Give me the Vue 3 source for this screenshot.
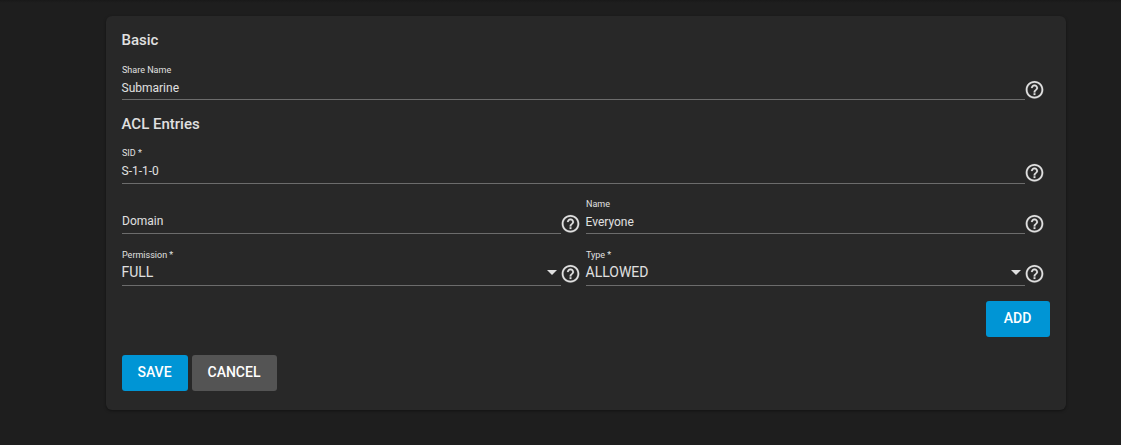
<template>
  <main class="page">
    <form class="card" @submit.prevent>
      <section v-for="section in sections" :key="section.title" class="fieldset">
        <h4 class="legend">{{ section.title }}</h4>
        <div
          v-for="(row, index) in section.rows"
          :key="index"
          class="row"
          :class="{ 'row-select': row[0].type === 'select' }"
        >
          <div v-for="field in row" :key="field.label" class="field" :class="field.type">
            <div class="control">
              <span v-if="field.value" class="label">{{ field.label }}</span>
              <span class="value" :class="{ placeholder: !field.value }">
                {{ field.value || field.label }}
              </span>
              <span v-if="field.type === 'select'" class="arrow"></span>
            </div>
            <svg class="help" viewBox="0 -0.4 24 24">
              <path
                d="M11 18h2v-2h-2v2zm1-16C6.48 2 2 6.48 2 12s4.48 10 10 10 10-4.48 10-10S17.52 2 12 2zm0 18c-4.41 0-8-3.59-8-8s3.59-8 8-8 8 3.59 8 8-3.59 8-8 8zm0-14c-2.21 0-4 1.79-4 4h2c0-1.1.9-2 2-2s2 .9 2 2c0 2-3 1.75-3 5h2c0-2.25 3-2.5 3-5 0-2.21-1.79-4-4-4z"
              />
            </svg>
          </div>
        </div>
      </section>
      <div class="list-actions">
        <button type="button" class="btn primary add">ADD</button>
      </div>
      <div class="form-actions">
        <button type="submit" class="btn primary save">SAVE</button>
        <button type="button" class="btn cancel">CANCEL</button>
      </div>
    </form>
  </main>
</template>

<script setup>
import { ref } from 'vue'

const sections = ref([
  {
    title: 'Basic',
    rows: [[{ label: 'Share Name', value: 'Submarine', type: 'input' }]]
  },
  {
    title: 'ACL Entries',
    rows: [
      [{ label: 'SID *', value: 'S-1-1-0', type: 'input sid' }],
      [
        { label: 'Domain', value: '', type: 'input' },
        { label: 'Name', value: 'Everyone', type: 'input' }
      ],
      [
        { label: 'Permission *', value: 'FULL', type: 'select' },
        { label: 'Type *', value: 'ALLOWED', type: 'select' }
      ]
    ]
  }
])
</script>

<style>
body {
  background: #1e1e1e;
}
</style>

<style scoped>
.page {
  box-sizing: border-box;
  height: 445px;
  padding: 16px 55px 0 106px;
  background: linear-gradient(#191919, #1e1e1e 3px);
  color: #e0e0e0;
  font-family: Roboto, sans-serif;
}

.card {
  box-sizing: border-box;
  height: 394px;
  padding: 12px 16px 0;
  border-radius: 6px;
  background: #282828;
  box-shadow: 0 1px 3px rgba(0, 0, 0, 0.4);
}

.fieldset + .fieldset {
  margin-top: 12px;
}

.legend {
  margin: 0 0 8px;
  font-size: 15px;
  font-weight: 500;
  line-height: 24px;
  text-indent: -0.5px;
}

.row {
  display: flex;
}

.row + .row {
  margin-top: 10px;
}

.row + .row-select {
  margin-top: 12px;
}

.field {
  display: flex;
  flex: 1;
  align-items: flex-end;
  padding-right: 5px;
}

.control {
  display: flex;
  box-sizing: border-box;
  flex: 1;
  flex-wrap: wrap;
  align-content: flex-end;
  align-items: center;
  justify-content: space-between;
  height: 40px;
  padding-bottom: 2px;
  border-bottom: 1px solid #6c6c6c;
}

.label {
  width: 100%;
  margin-bottom: 3px;
  font-size: 9px;
  line-height: 12px;
}

.value {
  font-size: 12px;
  line-height: 18px;
  text-indent: -0.5px;
}

.placeholder {
  margin-bottom: 1px;
  text-indent: 0;
}

.sid .control {
  padding-bottom: 3px;
}

.select .control {
  padding-bottom: 4px;
}

.select .label {
  margin-bottom: 2px;
}

.select .value {
  font-size: 14px;
}

.arrow {
  margin-right: 4px;
  border: 5px solid transparent;
  border-top-color: #e0e0e0;
  border-bottom-width: 0;
}

.help {
  width: 21px;
  height: 21px;
  margin-left: -1px;
  fill: #e0e0e0;
  stroke: #e0e0e0;
  stroke-width: 0.2;
}

.sid .help {
  margin-bottom: 1px;
}

.select .help {
  margin-bottom: 2px;
}

.list-actions {
  display: flex;
  justify-content: flex-end;
  margin-top: 15px;
}

.form-actions {
  display: flex;
  gap: 4px;
  margin-top: 18px;
}

.btn {
  height: 36px;
  padding: 0 1px 2px 0;
  border: 0;
  border-radius: 3px;
  color: #fff;
  font-family: inherit;
  font-size: 14px;
  font-weight: 500;
}

.primary {
  background: #0095d5;
}

.add {
  width: 64px;
}

.save {
  width: 66px;
}

.cancel {
  width: 85px;
  background: #545454;
}
</style>
